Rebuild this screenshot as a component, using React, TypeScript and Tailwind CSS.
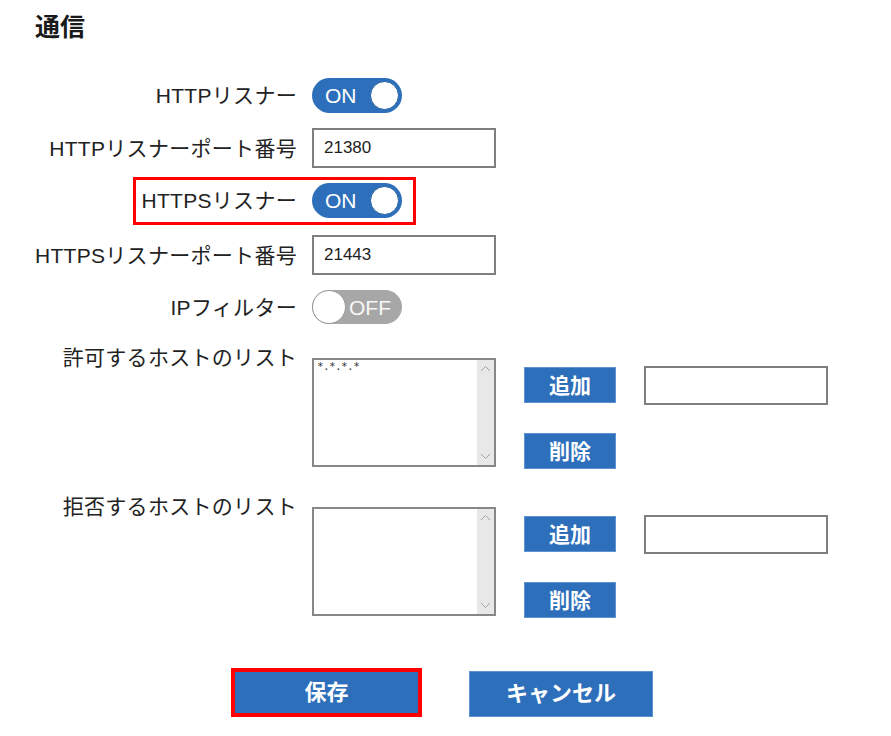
import React from "react";

function Toggle({ on }: { on: boolean }) {
  if (on) {
    return (
      <div className="flex h-[35px] w-[90px] items-center justify-between rounded-full bg-[#2d6fba] pl-[13px] pr-[3px]">
        <span className="text-[21px] leading-none text-white">ON</span>
        <span className="h-[29px] w-[29px] rounded-full border-[1.5px] border-[#1f5aa0] bg-white" />
      </div>
    );
  }
  return (
    <div className="flex h-[34px] w-[90px] items-center rounded-full bg-[#a7a7a7]">
      <span className="h-[34px] w-[34px] rounded-full border border-[#9a9a9a] bg-white" />
      <span className="ml-[3px] text-[21px] leading-none text-[#f7f7f7]">OFF</span>
    </div>
  );
}

function TextInput({ value, h = 40 }: { value?: string; h?: number }) {
  return (
    <div
      className={`flex w-[184px] items-center border-2 border-[#7f7f7f] bg-white pl-[10px] text-[17px] text-[#1e1e1e] ${
        h === 40 ? "h-[40px]" : "h-[39px]"
      }`}
    >
      {value}
    </div>
  );
}

function ListBox({ text }: { text?: string }) {
  return (
    <div className="flex h-[109px] w-[184px] border-2 border-[#878787] bg-white">
      <div className="flex-1 pl-[3px] pt-[1px] font-[family-name:DejaVu_Sans_Mono,monospace] text-[11px] leading-[12px] tracking-[-0.6px] text-[#333]">
        {text}
      </div>
      <div className="flex w-[17px] flex-col items-center justify-between bg-[#e8e8e8] py-[5px]">
        <svg width="11" height="7" viewBox="0 0 11 7" fill="none">
          <path d="M1 6 L5.5 1.5 L10 6" stroke="#a3a3a3" strokeWidth="1" />
        </svg>
        <svg width="11" height="7" viewBox="0 0 11 7" fill="none">
          <path d="M1 1 L5.5 5.5 L10 1" stroke="#a3a3a3" strokeWidth="1" />
        </svg>
      </div>
    </div>
  );
}

function SmallButton({ label }: { label: string }) {
  return (
    <button className="flex h-[36px] w-[92px] items-center justify-center border border-[#5d93d3] bg-[#2d6fba] text-[21px] font-bold leading-none text-white">
      {label}
    </button>
  );
}

function HostList({ label, text }: { label: string; text?: string }) {
  return (
    <div className="grid grid-cols-[297px_1fr] items-start gap-x-[15px]">
      <div className="-mt-[13px] text-right text-[21px] leading-[26px] tracking-[0.3px]">{label}</div>
      <div className="flex h-[109px] items-start">
        <ListBox text={text} />
        <div className="ml-[28px] flex flex-col pt-[9px]">
          <SmallButton label="追加" />
          <div className="mt-[30px]">
            <SmallButton label="削除" />
          </div>
        </div>
        <div className="ml-[28px] pt-[8px]">
          <TextInput h={39} />
        </div>
      </div>
    </div>
  );
}

export default function App() {
  return (
    <div className="min-h-[736px] w-[891px] bg-white font-[family-name:Liberation_Sans,Noto_Sans_CJK_JP,sans-serif] text-[#222]">
      <h1 className="pl-[35px] pt-[12px] text-[25px] font-bold leading-[30px] text-[#1a1a1a]">通信</h1>

      <div className="mt-[36px] flex flex-col">
        <div className="grid h-[34px] grid-cols-[297px_1fr] items-center gap-x-[15px]">
          <div className="text-right text-[21px] leading-none tracking-[0.3px]">HTTPリスナー</div>
          <Toggle on />
        </div>

        <div className="mt-[16px] grid h-[40px] grid-cols-[297px_1fr] items-center gap-x-[15px]">
          <div className="text-right text-[21px] leading-none tracking-[0.3px]">HTTPリスナーポート番号</div>
          <TextInput value="21380" />
        </div>

        <div className="relative mt-[15px] grid h-[34px] grid-cols-[297px_1fr] items-center gap-x-[15px]">
          <div className="text-right text-[21px] leading-none tracking-[0.3px]">HTTPSリスナー</div>
          <Toggle on />
          <div className="pointer-events-none absolute left-[133px] top-[-6px] h-[48px] w-[283px] border-[3px] border-[#ff0000]" />
        </div>

        <div className="mt-[18px] grid h-[40px] grid-cols-[297px_1fr] items-center gap-x-[15px]">
          <div className="text-right text-[21px] leading-none tracking-[0.3px]">HTTPSリスナーポート番号</div>
          <TextInput value="21443" />
        </div>

        <div className="mt-[15px] grid h-[34px] grid-cols-[297px_1fr] items-center gap-x-[15px]">
          <div className="text-right text-[21px] leading-none tracking-[0.3px]">IPフィルター</div>
          <Toggle on={false} />
        </div>

        <div className="mt-[34px]">
          <HostList label="許可するホストのリスト" text="*.*.*.*" />
        </div>

        <div className="mt-[40px]">
          <HostList label="拒否するホストのリスト" />
        </div>

        <div className="mt-[52px] flex items-start pl-[231px]">
          <button className="flex h-[49px] w-[191px] items-center justify-center border-4 border-[#ff0000] bg-[#2d6fba] text-[22px] font-bold leading-none text-white">
            保存
          </button>
          <button className="ml-[47px] mt-[3px] flex h-[46px] w-[184px] items-center justify-center border border-[#5d93d3] bg-[#2d6fba] text-[22px] font-bold leading-none text-white">
            キャンセル
          </button>
        </div>
      </div>
    </div>
  );
}
